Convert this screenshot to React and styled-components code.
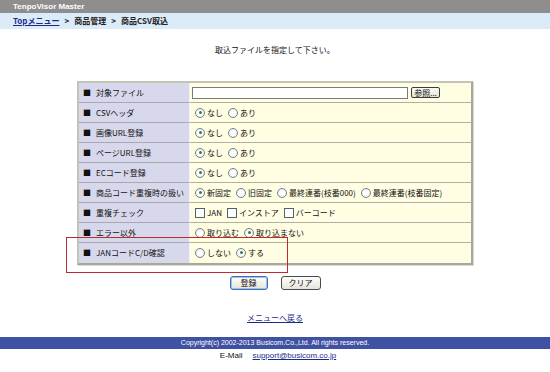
import styled, { createGlobalStyle } from 'styled-components'

const GlobalStyle = createGlobalStyle`
    body {
        margin: 0;
        background: #fff;
        font-family: "Noto Sans CJK JP", "Liberation Sans", sans-serif;
        font-size: 8px;
        color: #111;
    }
`

const rows = [
    { label: '対象ファイル', type: 'file' },
    { label: 'CSVヘッダ', options: ['なし', 'あり'], checked: 0 },
    { label: '画像URL登録', options: ['なし', 'あり'], checked: 0 },
    { label: 'ページURL登録', options: ['なし', 'あり'], checked: 0 },
    { label: 'ECコード登録', options: ['なし', 'あり'], checked: 0 },
    {
        label: '商品コード重複時の扱い',
        options: ['新固定', '旧固定', '最終連番(枝番000)', '最終連番(枝番固定)'],
        checked: 0
    },
    { label: '重複チェック', type: 'check', options: ['JAN', 'インストア', 'バーコード'] },
    { label: 'エラー以外', options: ['取り込む', '取り込まない'], checked: 1 },
    { label: 'JANコードC/D確認', options: ['しない', 'する'], checked: 1 }
]

const Page = styled.div`
    position: relative;
    width: 550px;
    height: 372px;
    overflow: hidden;
`

const TitleBar = styled.div`
    height: 13px;
    line-height: 13px;
    padding-left: 13px;
    background: #8e8e8e;
    color: #fff;
    font-family: "Liberation Sans", sans-serif;
    font-weight: bold;
    font-size: 8px;
`

const Breadcrumb = styled.div`
    height: 16px;
    line-height: 16px;
    padding-left: 13px;
    background: #dcebf8;
    font-weight: bold;
    font-size: 8px;
    color: #222;

    a {
        color: #1a2a8a;
        text-decoration: underline;
    }
`

const Sep = styled.span`
    padding: 0 5px;
`

const Message = styled.p`
    margin: 15px 0 0;
    height: 12px;
    line-height: 12px;
    text-align: center;
    font-size: 8px;
`

const Table = styled.table`
    margin: 25px auto 0;
    width: 396px;
    border-collapse: separate;
    border-spacing: 0;
    border: 2px solid #c4c4b4;
    border-right-color: #a8a89a;
    border-bottom-color: #a8a89a;
    box-shadow: 1px 1px 0 #dadad0;
`

const Label = styled.td`
    width: 106px;
    height: 19px;
    padding: 0 0 0 4px;
    background: #d8d8ec;
    border-bottom: 1px solid ${(p) => (p.$last ? 'transparent' : '#a8a8b0')};
    border-right: 1px solid #f2f2f8;
    white-space: nowrap;

    &::before {
        content: '■';
        margin-right: 5px;
    }
`

const Value = styled.td`
    height: 19px;
    padding: 0 0 0 5px;
    background: #fffde2;
    border-bottom: 1px solid ${(p) => (p.$last ? 'transparent' : '#b0b0a4')};
    white-space: nowrap;
`

const Options = styled.div`
    display: flex;
    align-items: center;
    gap: 5px;
`

const Option = styled.span`
    display: inline-flex;
    align-items: center;
    gap: 2px;
`

const Radio = styled.span`
    width: 8px;
    height: 8px;
    border-radius: 50%;
    border: 1px solid #6f8296;
    background: radial-gradient(circle, #fff 40%, #e4e4dc 100%);
    display: inline-flex;
    align-items: center;
    justify-content: center;

    &::after {
        content: '';
        width: 3px;
        height: 3px;
        border-radius: 50%;
        background: ${(p) => (p.$checked ? '#3b7d3b' : 'transparent')};
    }
`

const Check = styled.span`
    width: 8px;
    height: 8px;
    border: 1px solid #4f6070;
    background: #fff;
`

const FileRow = styled.div`
    display: flex;
    align-items: center;
    gap: 3px;
    margin-left: -3px;
`

const FileBox = styled.span`
    width: 214px;
    height: 10px;
    border: 1px solid #7a7a7a;
    background: #fff;
`

const SmallButton = styled.span`
    width: 27px;
    height: 9px;
    line-height: 9px;
    border: 1px solid #3c3c3c;
    border-radius: 2px;
    background: linear-gradient(#fbfbf8, #e4e2d8);
    text-align: center;
    font-size: 8px;
`

const Buttons = styled.div`
    display: flex;
    justify-content: center;
    gap: 13px;
    margin-top: 11px;
`

const Button = styled.button`
    width: ${(p) => p.$w}px;
    height: 14px;
    padding: 0;
    font-family: inherit;
    font-size: 8px;
    line-height: 12px;
    color: #111;
    border: 1px solid ${(p) => (p.$focus ? '#3d6fb8' : '#4a4a4a')};
    box-shadow: ${(p) => (p.$focus ? 'inset 0 0 0 1px #9ec2ee' : 'none')};
    border-radius: 3px;
    background: linear-gradient(#fdfdfb, #e6e4da);
`

const MenuLink = styled.a`
    display: block;
    margin-top: 22px;
    height: 12px;
    line-height: 12px;
    text-align: center;
    color: #1a2a8a;
    text-decoration: underline;
    font-size: 8px;
`

const Footer = styled.div`
    margin-top: 13px;
    height: 12px;
    line-height: 12px;
    background: #3f51a2;
    color: #fff;
    text-align: center;
    font-family: "Liberation Sans", sans-serif;
    font-size: 7px;
`

const Mail = styled.div`
    height: 14px;
    line-height: 14px;
    text-align: center;
    font-family: "Liberation Sans", sans-serif;
    font-size: 8px;
    padding-left: 6px;

    a {
        margin-left: 10px;
        color: #1a2a8a;
        text-decoration: underline;
    }
`

const Highlight = styled.div`
    position: absolute;
    left: 66px;
    top: 237px;
    width: 220px;
    height: 34px;
    border: 1px solid #c0282d;
    pointer-events: none;
`

function RowValue({ row }) {
    if (row.type === 'file') {
        return (
            <FileRow>
                <FileBox />
                <SmallButton>参照...</SmallButton>
            </FileRow>
        )
    }
    return (
        <Options>
            {row.options.map((o, i) => (
                <Option key={o}>
                    {row.type === 'check' ? <Check /> : <Radio $checked={row.checked === i} />}
                    {o}
                </Option>
            ))}
        </Options>
    )
}

export default function App() {
    return (
        <>
            <GlobalStyle />
            <Page>
                <TitleBar>TenpoVisor Master</TitleBar>
                <Breadcrumb>
                    <a>Topメニュー</a>
                    <Sep>&gt;</Sep>商品管理<Sep>&gt;</Sep>商品CSV取込
                </Breadcrumb>
                <Message>取込ファイルを指定して下さい。</Message>
                <Table>
                    <tbody>
                        {rows.map((row, i) => {
                            const last = i === rows.length - 1
                            return (
                                <tr key={row.label}>
                                    <Label $last={last}>{row.label}</Label>
                                    <Value $last={last}>
                                        <RowValue row={row} />
                                    </Value>
                                </tr>
                            )
                        })}
                    </tbody>
                </Table>
                <Buttons>
                    <Button $w={38} $focus>登録</Button>
                    <Button $w={40}>クリア</Button>
                </Buttons>
                <MenuLink>メニューへ戻る</MenuLink>
                <Footer>Copyright(c) 2002-2013 Busicom.Co.,Ltd. All rights reserved.</Footer>
                <Mail>
                    E-Mail<a>support@busicom.co.jp</a>
                </Mail>
                <Highlight />
            </Page>
        </>
    )
}
